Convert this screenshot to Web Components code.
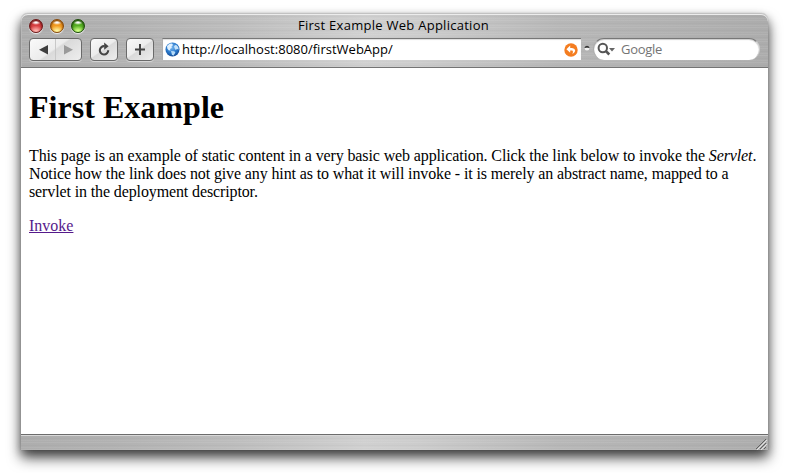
<!DOCTYPE html>
<html lang="en">
<head>
<meta charset="utf-8">
<title>First Example Web Application</title>
<style>
html,body{margin:0;width:794px;height:473px;overflow:hidden;background:#fff}
body{padding:13px 26px 23px 21px;box-sizing:border-box}
</style>
</head>
<body>
<browser-window>
  <title-bar slot="top">First Example Web Application</title-bar>
  <tool-bar slot="top"></tool-bar>
  <web-page></web-page>
  <status-bar slot="bottom"></status-bar>
</browser-window>
<script>
const define = (name, html) => customElements.define(name, class extends HTMLElement {
  constructor() {
    super();
    this.attachShadow({mode: 'open'}).innerHTML = html;
  }
});

define('browser-window', `<style>
:host{display:flex;flex-direction:column;box-sizing:border-box;width:747px;height:437px;border-radius:7px 7px 0 0;
 box-shadow:0 8px 14px rgba(0,0,0,.66),0 4px 9px rgba(0,0,0,.3),0 0 1px rgba(0,0,0,.3);background:#fff}
header,footer{background:
 repeating-linear-gradient(180deg,rgba(255,255,255,.08) 0 1px,transparent 1px 3px,rgba(0,0,0,.02) 3px 4px,transparent 4px 5px,rgba(255,255,255,.06) 5px 6px,transparent 6px 7px),
 linear-gradient(90deg,#adadad 0,#b1b1b1 12%,#bcbcbc 28%,#d0d0d0 46%,#cccccc 53%,#b7b7b7 72%,#acacac 100%)}
header{height:55px;box-sizing:border-box;border-radius:7px 7px 0 0;border-bottom:1px solid #747474;box-shadow:inset 0 1px #c2c2c2,inset 0 2px #ececec,inset 1px 0 #b8b8b8}
main{flex:1;background:#fff}
footer{height:16px;box-sizing:border-box;border-top:1px solid #6c6c6c;box-shadow:inset 0 1px #d8d8d8}
</style><header><slot name="top"></slot></header><main><slot></slot></main><footer><slot name="bottom"></slot></footer>`);

define('title-bar', `<style>
:host{display:grid;grid-template-columns:64px 1fr 64px;height:24px;align-items:center;font:13px/24px "Open Sans","Noto Sans",sans-serif;color:#000}
.lights{display:flex;gap:7px;padding:2px 0 0 8px}
.title{text-align:center;white-space:nowrap;letter-spacing:.27px;padding-right:2px}
</style><div class="lights"><window-light style="--a:#6e1717;--b:#d63e40;--c:#ffb1ac"></window-light><window-light style="--a:#8a4a08;--b:#f29a20;--c:#fff39a"></window-light><window-light style="--a:#1d4e08;--b:#55ae22;--c:#ccff82"></window-light></div><span class="title"><slot></slot></span>`);

define('window-light', `<style>
:host{display:block;width:14px;height:14px;border-radius:50%;box-sizing:border-box;border:1px solid var(--a);
 background:radial-gradient(ellipse 5px 2.5px at 50% 20%,#fff 20%,transparent 100%),radial-gradient(ellipse 7px 6px at 50% 95%,var(--c) 20%,transparent),radial-gradient(circle at 50% 60%,var(--b) 40%,var(--a) 120%);
 box-shadow:0 1px 1px rgba(255,255,255,.8),inset 0 1px 1px var(--a)}
</style>`);

define('tool-button', `<style>
:host{display:flex;box-sizing:border-box;width:28px;height:23px;border:1px solid #6a6a6a;border-radius:4px;
 background:linear-gradient(145deg,#fafafa 0,#ececec 47%,#dadada 51%,#eee 100%);box-shadow:0 1px rgba(255,255,255,.45)}
:host([wide]){width:53px}
</style><slot></slot>`);

define('tool-bar', `<style>
:host{display:flex;height:30px;padding:1px 8px 0;box-sizing:border-box;align-items:flex-start;font:13px/21px "Open Sans","Noto Sans",sans-serif}
svg{display:block}
tool-button{margin-right:8px}
.address{display:flex;align-items:center;box-sizing:border-box;width:419px;height:22px;border-top:1px solid #777;border-left:1px solid #b0b0b0;background:#fff;box-shadow:inset 0 1px 1px #ddd;padding:0 3px 0 2px}
.url{flex:1;padding-left:2px;letter-spacing:.01px;white-space:nowrap;color:#000}
.bug{margin:7px 3px 0 3px}
.search{display:flex;align-items:center;box-sizing:border-box;width:167px;height:22px;border-radius:11px;background:#fff;border-top:1px solid #777;border-left:1px solid #aaa;border-right:1px solid #ccc;box-shadow:inset 0 1px 1px #ccc;padding-left:3px;color:#747474}
.search span{padding-left:5px;letter-spacing:-.3px}
</style>
<tool-button wide><svg width="51" height="21"><path d="M25.5 0V21" stroke="#c8c8c8"/><path d="M9 10.7 18 6V15.4Z" fill="#3e3e3e"/><path d="M43 10.7 34 6V15.4Z" fill="#9a9a9a"/></svg></tool-button>
<tool-button><svg width="26" height="21"><path d="M13.6 7.2A4.2 4.2 0 1 0 17.2 11.2" fill="none" stroke="#444" stroke-width="2.1"/><path d="M13.2 3.6 17.6 7.2 13.2 10.8Z" fill="#444"/></svg></tool-button>
<tool-button><svg width="26" height="21"><path d="M13 5V16M8 10.5H18" stroke="#444" stroke-width="2"/></svg></tool-button>
<div class="address"><svg width="15" height="15" viewBox="0 0 15 15"><defs><radialGradient id="g" cx=".45" cy=".35" r=".65"><stop stop-color="#75b5ef"/><stop offset=".65" stop-color="#2675c8"/><stop offset="1" stop-color="#164c94"/></radialGradient></defs><circle cx="7.5" cy="7.5" r="7" fill="url(#g)"/><path d="M2 4 4.5 1.8 7 1.6 8 3 6.5 4.5 6.8 6 5 7 5.6 8.5 3.6 8.2 2.3 6.5Z" fill="#e0f1ff"/><path d="M9 4 11 2.8 13.2 5 13.7 7.5 12 7 10.7 8 9.5 6.3Z" fill="#c4e2fa"/><path d="M6 9 9.3 9.2 10.4 10.6 8.4 13.8 6.8 12.2Z" fill="#b5dbf8"/></svg><span class="url">http://localhost:8080/firstWebApp/</span><svg width="14" height="14" viewBox="0 0 14 14"><circle cx="7" cy="7" r="6.7" fill="#f47d20"/><path d="M6.2 2.6 2.4 6.2 6.2 9.8V7.4H8Q9.6 7.6 8.4 11.2 11.4 9.6 11.2 7.2 10.7 5 8 4.9H6.2Z" fill="#fff"/></svg></div>
<svg class="bug" width="6" height="7"><circle cx="3" cy="3.2" r="2.4" fill="#f4f4f4"/><path d="M.5 3.2A2.5 2.5 0 0 1 5.5 3.2L4 2.8H2Z" fill="#333"/></svg>
<div class="search"><svg width="19" height="15"><circle cx="5.8" cy="6" r="4.2" fill="none" stroke="#555" stroke-width="2"/><path d="M8.7 8.9 12.3 12.5" stroke="#555" stroke-width="2.6"/><path d="M12 6H18L15 9.4Z" fill="#666"/></svg><span>Google</span></div>`);

define('web-page', `<style>
:host{display:block;padding:21px 8px 0;font:16px/18px "Liberation Serif",serif;color:#000}
h1{font-size:32px;line-height:37px;margin:0 0 21px;letter-spacing:.03px}
p{margin:0 0 16px;white-space:nowrap;letter-spacing:-.121px}
a{color:#551a8b;text-decoration:underline;letter-spacing:0}
</style><h1>First Example</h1><p>This page is an example of static content in a very basic web application. Click the link below to invoke the <em>Servlet</em>.<br>Notice how the link does not give any hint as to what it will invoke - it is merely an abstract name, mapped to a<br>servlet in the deployment descriptor.</p><p><a href="#">Invoke</a></p>`);

define('status-bar', `<style>
:host{display:flex;justify-content:flex-end;height:15px;padding-right:1px}
</style><svg width="12" height="15"><path d="M1 14 11 4M5 14 11 8M9 14 11 12" stroke="#606060"/><path d="M2 15 12 5M6 15 12 9" stroke="#e2e2e2"/></svg>`);
</script>
</body>
</html>
